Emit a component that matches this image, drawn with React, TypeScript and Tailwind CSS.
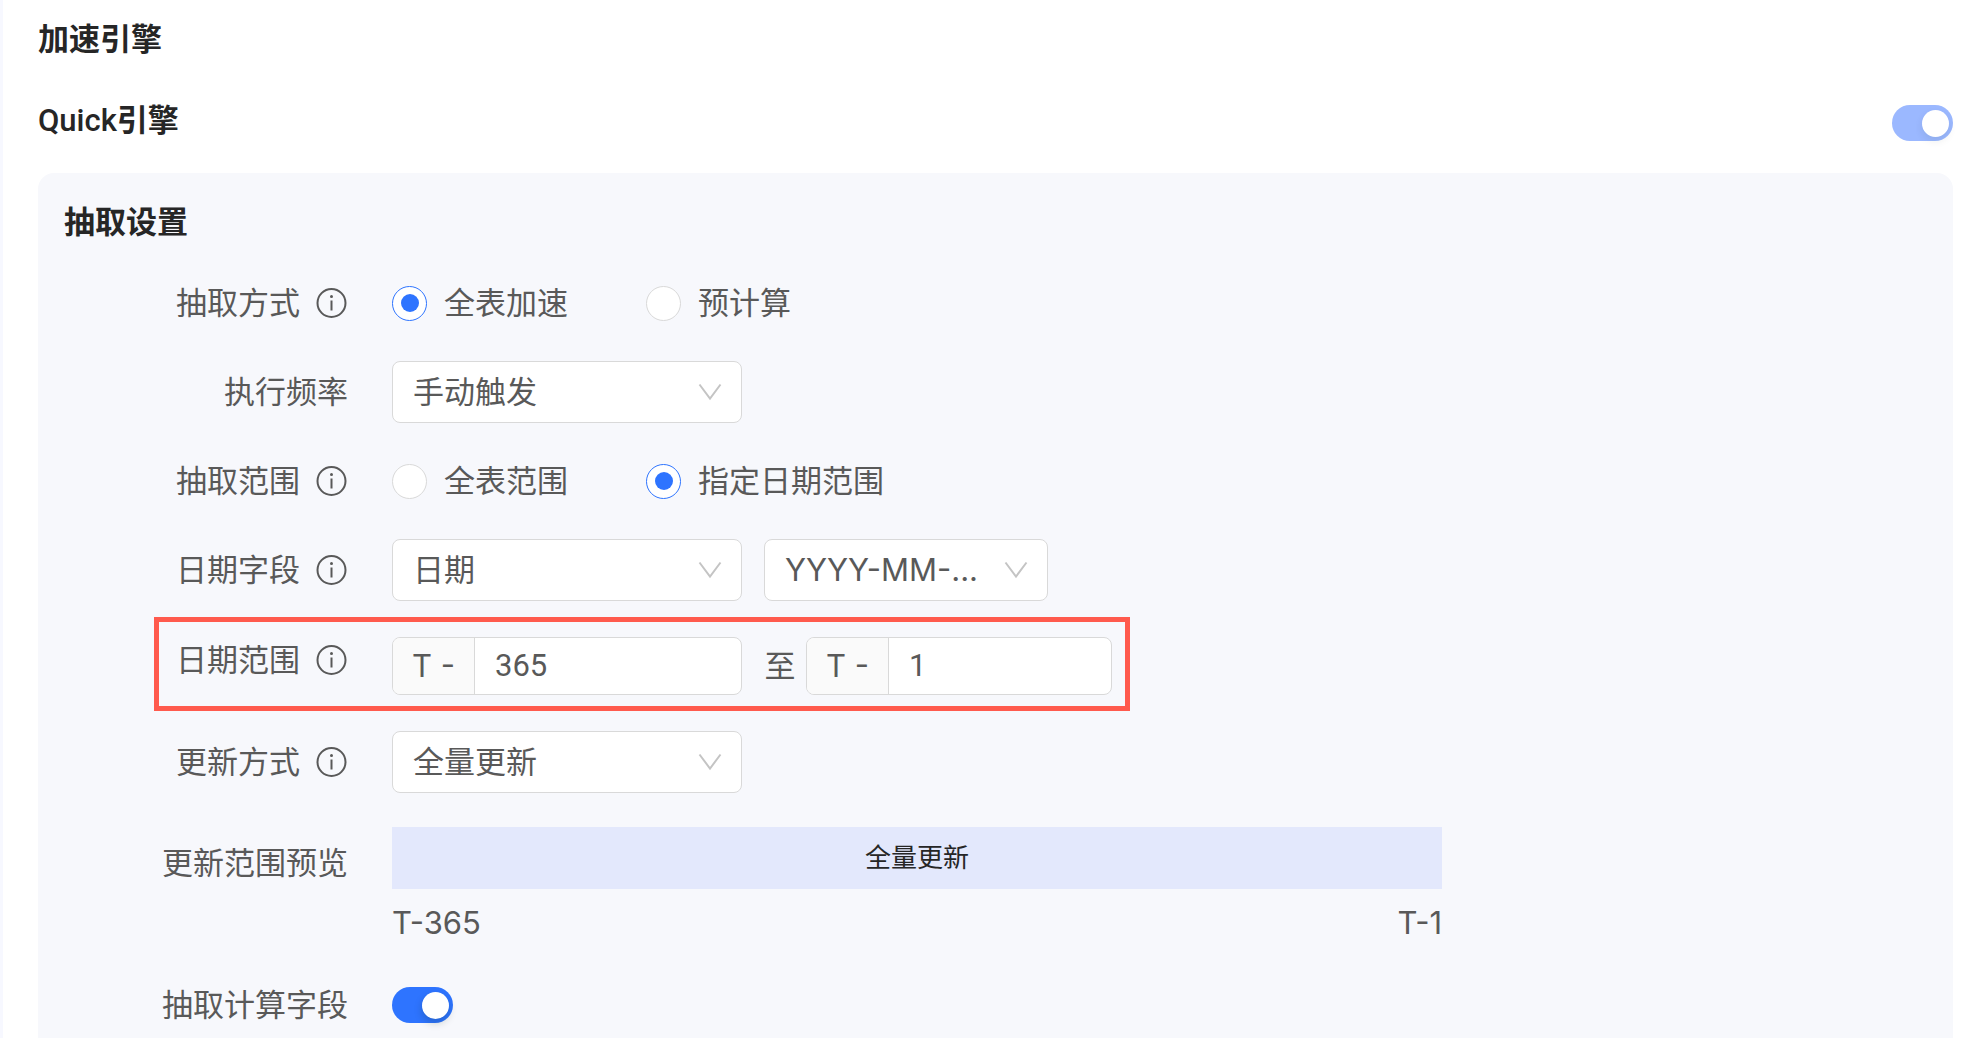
import { useState } from 'react';
import type { ReactNode } from 'react';

function InfoIcon() {
  return (
    <svg className="w-8 h-8 shrink-0" viewBox="0 0 32 32" fill="none" stroke="currentColor" aria-hidden="true">
      <circle cx="15.5" cy="16" r="14" strokeWidth="2" />
      <path d="M15.5 13.5V23.5" strokeWidth="2" />
      <circle cx="15.5" cy="9.5" r="1.5" fill="currentColor" stroke="none" />
    </svg>
  );
}

function ChevronIcon() {
  return (
    <svg
      className="absolute right-5 top-1/2 -translate-y-1/2 w-6 h-6 pointer-events-none text-[#c4c4c4]"
      viewBox="0 0 24 24"
      fill="none"
      stroke="currentColor"
      aria-hidden="true"
    >
      <path d="M1.5 4.5L12 18.5L22.5 4.5" strokeWidth="2" />
    </svg>
  );
}

interface FieldLabelProps {
  id?: string;
  htmlFor?: string;
  info?: boolean;
  children: ReactNode;
}

function FieldLabel({ id, htmlFor, info, children }: FieldLabelProps) {
  return (
    <div className="flex flex-1 items-center justify-end gap-4">
      <label id={id} htmlFor={htmlFor} className="whitespace-nowrap">{children}</label>
      {info && <InfoIcon />}
    </div>
  );
}

interface SwitchProps {
  checked: boolean;
  disabled?: boolean;
  labelledBy: string;
  onChange?: () => void;
}

function Switch({ checked, disabled, labelledBy, onChange }: SwitchProps) {
  return (
    <button
      type="button"
      role="switch"
      aria-checked={checked}
      aria-labelledby={labelledBy}
      disabled={disabled}
      onClick={onChange}
      className={`flex items-center w-[61px] h-9 px-1 rounded-full shrink-0 transition-colors ${
        checked ? 'justify-end' : 'justify-start'
      } ${disabled ? 'bg-[#9bb8ff]' : checked ? 'bg-[#2e74ff] cursor-pointer' : 'bg-gray-300 cursor-pointer'}`}
    >
      <span
        className={`w-[27px] h-[27px] rounded-full bg-white ${
          disabled ? 'shadow-[0_4px_8px_rgba(0,35,11,0.08)]' : 'shadow-[0_4px_8px_rgba(0,35,11,0.2)]'
        }`}
      />
    </button>
  );
}

interface RadioProps {
  name: string;
  label: string;
  checked: boolean;
  onChange: () => void;
}

function Radio({ name, label, checked, onChange }: RadioProps) {
  return (
    <label className="flex items-center gap-[17px] whitespace-nowrap cursor-pointer">
      <input
        type="radio"
        name={name}
        checked={checked}
        onChange={onChange}
        className="appearance-none grid place-content-center w-[35px] h-[35px] rounded-full border border-[#d9d9d9] bg-white checked:border-[#2e74ff] checked:before:block checked:before:w-[18px] checked:before:h-[18px] checked:before:rounded-full checked:before:bg-[#2e74ff]"
      />
      {label}
    </label>
  );
}

interface SelectProps {
  id?: string;
  labelledBy?: string;
  options: string[];
  width: string;
}

function Select({ id, labelledBy, options, width }: SelectProps) {
  return (
    <div className={`relative ${width}`}>
      <select
        id={id}
        aria-labelledby={labelledBy}
        className="appearance-none w-full h-[62px] pl-5 pr-14 rounded-lg border border-[#d9d9d9] bg-white outline-none focus:border-[#2e74ff]"
      >
        {options.map((option) => (
          <option key={option}>{option}</option>
        ))}
      </select>
      <ChevronIcon />
    </div>
  );
}

interface OffsetInputProps {
  id?: string;
  labelledBy?: string;
  value: string;
  width: string;
  onChange: (value: string) => void;
}

function OffsetInput({ id, labelledBy, value, width, onChange }: OffsetInputProps) {
  return (
    <div className={`flex h-[58px] rounded-lg border border-[#d9d9d9] bg-white overflow-hidden ${width}`}>
      <span className="flex items-center justify-center w-[82px] shrink-0 border-r border-[#d9d9d9] bg-[#fafafa] whitespace-nowrap">
        T -
      </span>
      <input
        type="text"
        id={id}
        aria-labelledby={labelledBy}
        value={value}
        onChange={(e) => onChange(e.target.value)}
        className="flex-1 min-w-0 px-5 outline-none font-['Roboto','Noto_Sans_CJK_SC',sans-serif]"
      />
    </div>
  );
}

function Row({ label, children }: { label: ReactNode; children: ReactNode }) {
  return (
    <div className="flex items-center h-[62px] gap-11">
      <div className="flex w-[310px] shrink-0">{label}</div>
      {children}
    </div>
  );
}

export default function App() {
  const [mode, setMode] = useState('full');
  const [range, setRange] = useState('date');
  const [start, setStart] = useState('365');
  const [end, setEnd] = useState('1');
  const [calcFields, setCalcFields] = useState(true);

  return (
    <main className="flex flex-col min-h-screen pl-[35px] pr-[21px] border-l-[3px] border-[#f7f8ff] bg-white text-[31px] leading-[46px] text-[#595959] font-['Inter','Noto_Sans_CJK_SC',sans-serif]">
      <h1 className="pt-4 font-bold text-[#262626]">加速引擎</h1>
      <div className="flex items-center justify-between pt-9 pb-[29px]">
        <h2
          id="quickEngine"
          className="font-medium text-[#262626] font-['Roboto','Noto_Sans_CJK_SC',sans-serif]"
        >
          Quick<span className="font-bold">引擎</span>
        </h2>
        <div className="pt-1">
          <Switch checked disabled labelledBy="quickEngine" />
        </div>
      </div>

      <section className="flex-1 rounded-t-2xl bg-[#f7f8fc]">
        <h3 className="pt-[26px] pl-[26px] pb-[27px] font-bold text-[#262626]">抽取设置</h3>

        <form className="flex flex-col" onSubmit={(e) => e.preventDefault()}>
          <div className="flex flex-col gap-[27px]">
            <Row label={<FieldLabel info>抽取方式</FieldLabel>}>
              <div className="flex">
                <div className="w-[254px]">
                  <Radio name="mode" label="全表加速" checked={mode === 'full'} onChange={() => setMode('full')} />
                </div>
                <Radio name="mode" label="预计算" checked={mode === 'pre'} onChange={() => setMode('pre')} />
              </div>
            </Row>

            <Row label={<FieldLabel htmlFor="frequency">执行频率</FieldLabel>}>
              <Select id="frequency" options={['手动触发']} width="w-[350px]" />
            </Row>

            <Row label={<FieldLabel info>抽取范围</FieldLabel>}>
              <div className="flex">
                <div className="w-[254px]">
                  <Radio name="range" label="全表范围" checked={range === 'all'} onChange={() => setRange('all')} />
                </div>
                <Radio name="range" label="指定日期范围" checked={range === 'date'} onChange={() => setRange('date')} />
              </div>
            </Row>

            <Row label={<FieldLabel id="dateFieldLabel" htmlFor="dateField" info>日期字段</FieldLabel>}>
              <div className="flex gap-[22px]">
                <Select id="dateField" options={['日期']} width="w-[350px]" />
                <Select labelledBy="dateFieldLabel" options={['YYYY-MM-...']} width="w-[284px]" />
              </div>
            </Row>
          </div>

          {/* 日期范围，红框高亮 */}
          <div className="flex items-start self-start mt-4 ml-[116px] pt-[15px] pb-[11px] pr-[13px] gap-11 border-5 border-[#ff5a4d]">
            <div className="flex w-[189px] shrink-0">
              <FieldLabel id="dateRangeLabel" htmlFor="dateStart" info>日期范围</FieldLabel>
            </div>
            <div className="flex items-center">
              <OffsetInput id="dateStart" value={start} width="w-[350px]" onChange={setStart} />
              <span className="w-16 text-center pl-3">至</span>
              <OffsetInput labelledBy="dateRangeLabel" value={end} width="w-[306px]" onChange={setEnd} />
            </div>
          </div>

          <div className="mt-5">
            <Row label={<FieldLabel htmlFor="updateMode" info>更新方式</FieldLabel>}>
              <Select id="updateMode" options={['全量更新']} width="w-[350px]" />
            </Row>
          </div>

          <div className="flex items-start gap-11 mt-[34px]">
            <div className="w-[310px] shrink-0 pt-[13px] text-right">更新范围预览</div>
            <div className="w-[1050px]">
              <div className="flex items-center justify-center h-[62px] bg-[#e3e8fc] text-[26px] text-[#262626]">
                全量更新
              </div>
              <div className="flex justify-between pt-[11px]">
                <span>T-365</span>
                <span>T-1</span>
              </div>
            </div>
          </div>

          <div className="mt-7">
            <Row label={<FieldLabel id="calcFields">抽取计算字段</FieldLabel>}>
              <Switch checked={calcFields} labelledBy="calcFields" onChange={() => setCalcFields(!calcFields)} />
            </Row>
          </div>
        </form>
      </section>
    </main>
  );
}
